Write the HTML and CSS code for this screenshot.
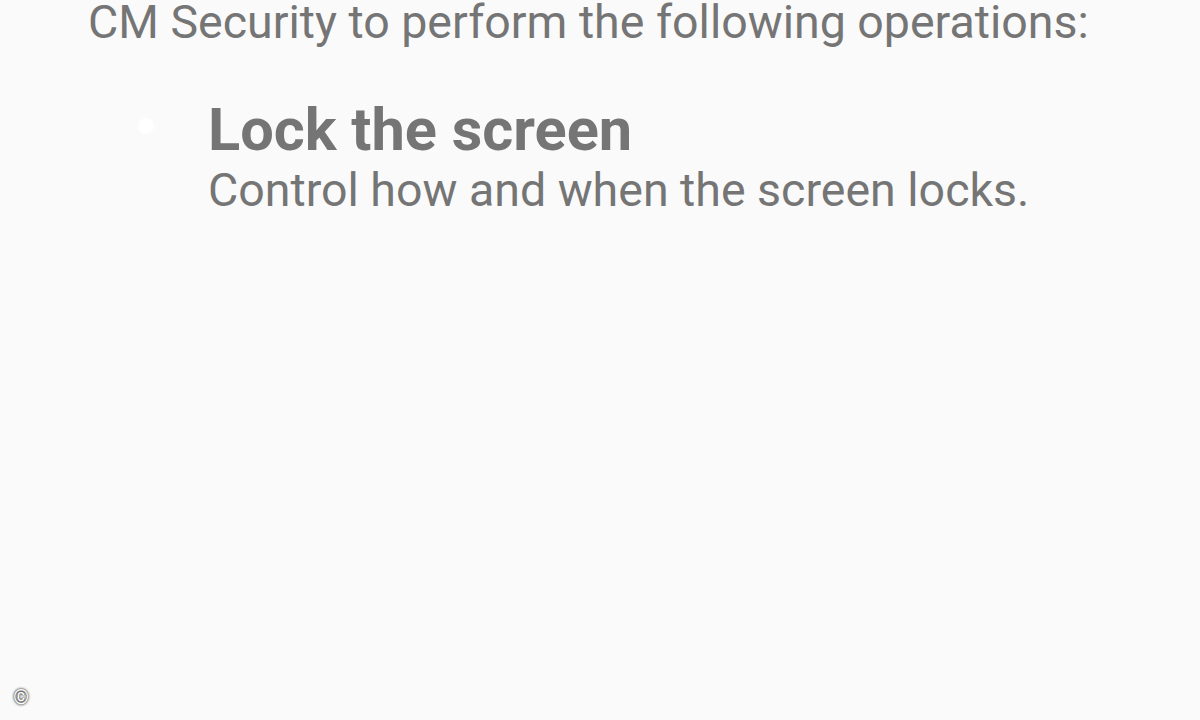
FILE: index.html
```html
<!DOCTYPE html>
<html>
<head>
<meta charset="utf-8">
<link rel="stylesheet" href="styles.css">
</head>
<body>
<div class="page">
  <p class="intro">CM Security to perform the following operations:</p>
  <ul class="ops">
    <li class="op">
      <span class="bullet"></span>
      <div class="op-text">
        <div class="op-title">Lock the screen</div>
        <div class="op-desc">Control how and when the screen locks.</div>
      </div>
    </li>
  </ul>
</div>
<div class="copy">©</div>
</body>
</html>
```
FILE: styles.css
```css
html, body {
  margin: 0;
  padding: 0;
  background: #fafafa;
  width: 1200px;
  height: 720px;
  overflow: hidden;
  font-family: Roboto, "Liberation Sans", sans-serif;
  color: #757575;
}
.page {
  padding-left: 88px;
}
.intro {
  margin: 0;
  font-size: 46.5px;
  line-height: 44px;
  white-space: nowrap;
}
.ops {
  list-style: none;
  margin: 0;
  padding: 0;
}
.op {
  display: flex;
  align-items: flex-start;
  margin-top: 56px;
}
.bullet {
  flex: none;
  width: 16px;
  height: 16px;
  border-radius: 50%;
  background: #ffffff;
  margin-left: 50px;
  margin-top: 18px;
  filter: blur(1px);
}
.op-text {
  margin-left: 54px;
  white-space: nowrap;
}
.op-title {
  font-size: 59.5px;
  font-weight: bold;
  line-height: 60px;
}
.op-desc {
  font-size: 46.5px;
  line-height: 60px;
}
.copy {
  position: absolute;
  left: 11px;
  top: 686px;
  width: 20px;
  height: 22px;
  font-size: 20px;
  line-height: 22px;
  text-align: center;
  color: #ffffff;
  text-shadow: 0 0 2px #222, 0 0 3px #444;
}
```
